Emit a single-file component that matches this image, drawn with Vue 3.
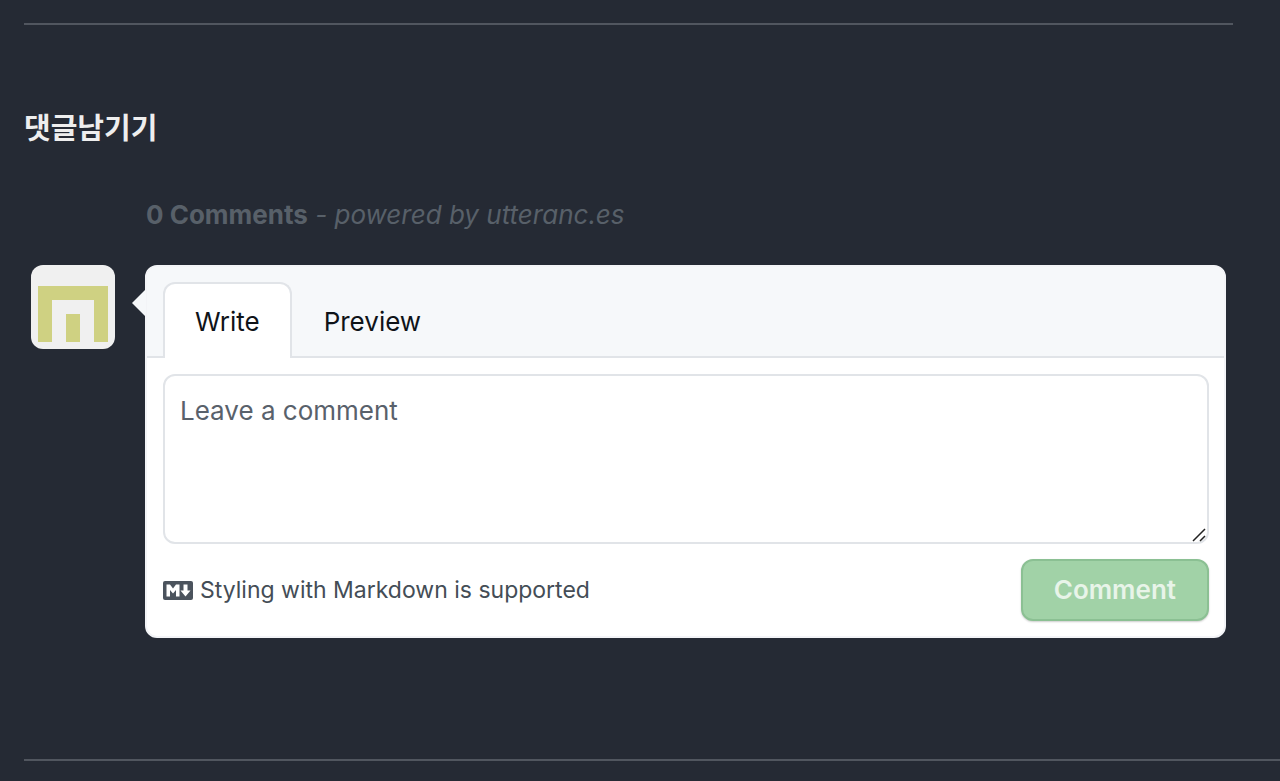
<script setup>
import { ref } from 'vue'

const tab = ref('write')
const comment = ref('')
</script>

<template>
  <main class="page">
    <hr class="rule rule-top" />
    <section class="thread" aria-labelledby="thread-title">
      <h2 id="thread-title" class="title">댓글남기기</h2>
      <p class="summary">
        <a class="count" href="#comments">0 Comments</a>
        <em> - powered by <a href="#utterances">utteranc.es</a></em>
      </p>
      <div class="composer">
        <a class="avatar" href="#profile" aria-label="Profile">
          <svg viewBox="0 0 84 84" aria-hidden="true">
            <rect width="84" height="84" fill="#f0f0f0" />
            <path d="M7 21H77V77H63V35H21V77H7ZM35 49H49V77H35Z" fill="#cfd182" />
          </svg>
        </a>
        <form class="card" @submit.prevent>
          <svg class="pointer" viewBox="0 0 14 28" aria-hidden="true">
            <path d="M14 0L0 14L14 28Z" fill="#f6f8fa" />
          </svg>
          <header class="tabs" role="tablist">
            <button type="button" role="tab" class="tab" :class="{ active: tab === 'write' }" :aria-selected="tab === 'write'" @click="tab = 'write'">Write</button>
            <button type="button" role="tab" class="tab" :class="{ active: tab === 'preview' }" :aria-selected="tab === 'preview'" @click="tab = 'preview'">Preview</button>
          </header>
          <div class="body">
            <div class="field">
              <textarea v-model="comment" class="text" aria-label="Leave a comment" placeholder="Leave a comment"></textarea>
              <svg class="grip" viewBox="0 0 14 14" aria-hidden="true">
                <path d="M1 13L13 1M8 13L13 8" stroke="#222" stroke-width="1.5" fill="none" />
              </svg>
            </div>
            <footer class="footer">
              <a class="markdown" href="#markdown">
                <svg class="mark" viewBox="0 0 30 19" aria-hidden="true">
                  <rect width="30" height="19" rx="2" fill="#4b535d" />
                  <path d="M3.5 15.5V3.5H7L10 7.5L13 3.5H16.5V15.5H13V9L10 12.5L7 9V15.5ZM20.5 3.5H24.5V9.5H27.5L22.5 15.5L17.5 9.5H20.5Z" fill="#fff" />
                </svg>
                <span>Styling with Markdown is supported</span>
              </a>
              <button class="submit" type="submit" :disabled="!comment">Comment</button>
            </footer>
          </div>
        </form>
      </div>
    </section>
    <hr class="rule" />
  </main>
</template>

<style>
body {
  margin: 0;
  background: #252a34;
}
</style>

<style scoped>
.page {
  box-sizing: border-box;
  padding: 23px 0 20px 24px;
  overflow: hidden;
  font-family: Inter, "Noto Sans CJK KR", sans-serif;
  font-size: 26px;
  line-height: 40px;
}
.rule {
  height: 2px;
  margin: 0;
  border: 0;
  background: #51565f;
}
.rule-top {
  margin-right: 47px;
}
.thread {
  padding: 82px 54px 121px 7px;
}
.title {
  margin: 0 0 44px -7px;
  font-size: 29px;
  line-height: 44px;
  font-weight: 700;
  color: #eee;
}
.summary {
  margin: 0 0 30px 115px;
  color: #586069;
}
.summary a {
  color: inherit;
  text-decoration: none;
}
.summary .count {
  font-weight: 700;
}
.composer {
  display: flex;
  align-items: flex-start;
  gap: 30px;
}
.avatar {
  flex: none;
  width: 84px;
  height: 84px;
  overflow: hidden;
  border-radius: 12px;
}
.avatar svg {
  display: block;
}
.card {
  position: relative;
  flex: 1;
  box-sizing: border-box;
  min-width: 0;
  border: 2px solid #f3f4f7;
  border-radius: 12px;
  background: #fff;
}
.pointer {
  position: absolute;
  top: 22px;
  left: -15px;
  width: 14px;
  height: 28px;
}
.tabs {
  display: flex;
  padding: 15px 16px 0;
  border-bottom: 2px solid #e1e4e8;
  border-radius: 10px 10px 0 0;
  background: #f6f8fa;
}
.tab {
  margin: 0 0 -2px;
  padding: 18px 30px 16px;
  border: 2px solid transparent;
  border-bottom: 0;
  border-radius: 12px 12px 0 0;
  background: transparent;
  font: inherit;
  color: #0f1318;
}
.tab.active {
  border-color: #e1e4e8;
  background: #fff;
}
.body {
  padding: 16px 15px 15px 16px;
}
.field {
  position: relative;
}
.text {
  display: block;
  box-sizing: border-box;
  width: 100%;
  height: 170px;
  padding: 15px;
  border: 2px solid #e1e4e8;
  border-radius: 12px;
  background: #fff;
  font: inherit;
  color: #24292e;
  resize: vertical;
}
.text::placeholder {
  color: #59616b;
  opacity: 1;
}
.text::-webkit-resizer {
  background: transparent;
}
.grip {
  position: absolute;
  right: 3px;
  bottom: 2px;
  width: 14px;
  height: 14px;
  pointer-events: none;
}
.footer {
  display: flex;
  align-items: center;
  justify-content: space-between;
  margin-top: 15px;
}
.markdown {
  display: flex;
  align-items: center;
  gap: 7px;
  font-size: 23px;
  color: #444d56;
  text-decoration: none;
}
.mark {
  width: 30px;
  height: 19px;
}
.submit {
  padding: 9px 31px;
  border: 2px solid #8bc093;
  border-radius: 12px;
  background: #a1d2a7;
  box-shadow: 0 1px 2px #0003;
  font: inherit;
  font-weight: 600;
  color: #e8f4e9;
}
</style>
